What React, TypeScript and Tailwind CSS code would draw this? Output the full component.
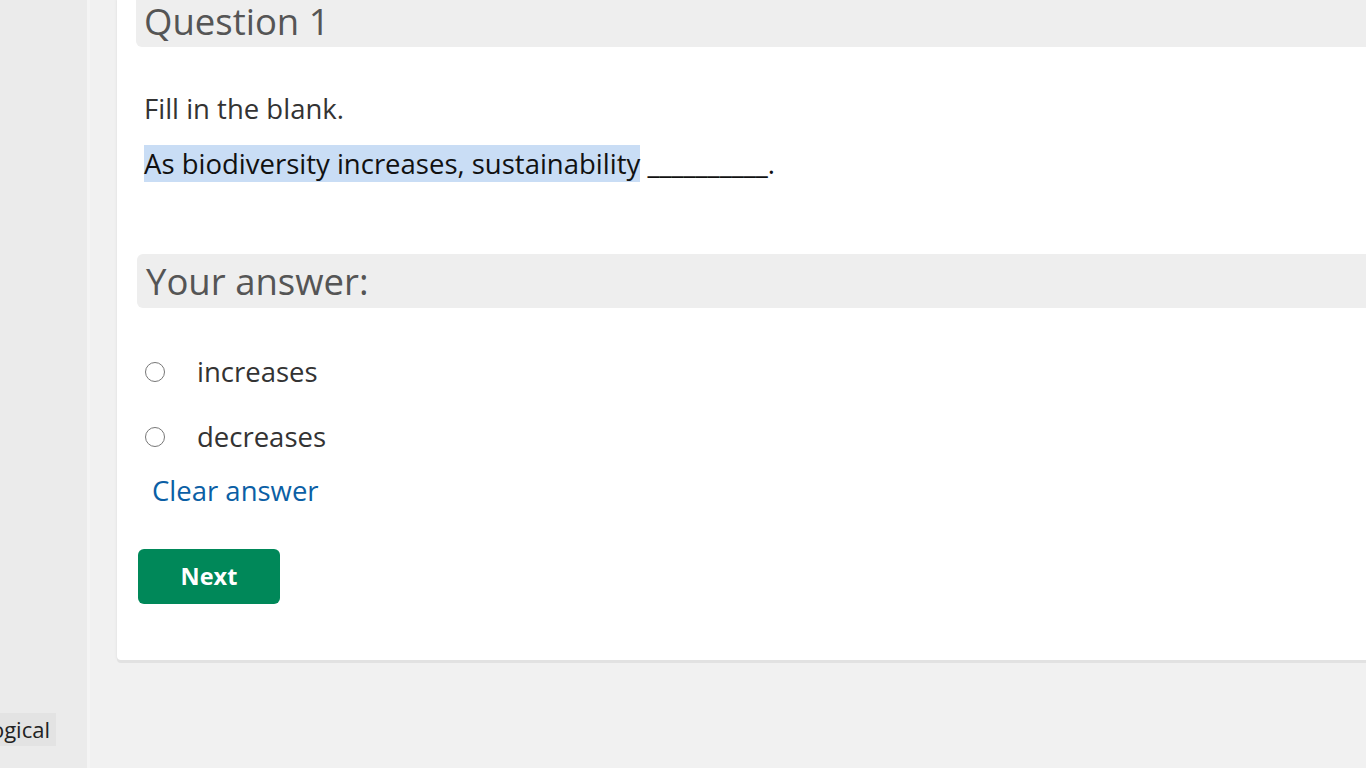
import React from 'react';

const font = { fontFamily: '"Open Sans", "Noto Sans", sans-serif' };

const Radio: React.FC<{ label: string }> = ({ label }) => (
  <label className="flex items-center h-[41px] cursor-pointer">
    <span className="ml-[9px] w-[20px] h-[20px] rounded-full border-[1.5px] border-[#777] bg-white shrink-0" />
    <span className="ml-[32px] text-[27.5px] text-[#333]">{label}</span>
  </label>
);

const App: React.FC = () => {
  return (
    <div className="flex w-[1366px] h-[768px] overflow-hidden bg-[#f1f1f1]" style={font}>
      {/* Sidebar */}
      <div className="w-[90px] shrink-0 bg-[#ebebeb] border-r-[3px] border-[#f4f4f4] flex flex-col justify-end pb-[22px]">
        <div className="w-[56px] h-[33px] bg-[#e3e3e3] overflow-hidden flex justify-end items-center">
          <span className="text-[22px] text-[#222] whitespace-nowrap pr-[6px]">Biological</span>
        </div>
      </div>

      {/* Main */}
      <div className="flex-1 pl-[27px]">
        <div className="bg-white h-[660px] rounded-bl-[4px] shadow-[0_3px_0_0_#e2e2e2,-1px_0_2px_0_#e6e6e6] pl-[19px]">
          {/* Question header */}
          <div className="h-[47px] bg-[#eeeeee] rounded-bl-[6px] pl-[8px] flex items-center">
            <h2 className="text-[36.5px] leading-[42px] text-[#555] -mt-[5px]">Question 1</h2>
          </div>

          <div className="pl-[8px]">
            <p className="mt-[41px] text-[27.5px] leading-[41px] text-[#333]">Fill in the blank.</p>
            <p className="mt-[14px] text-[27.5px] leading-[41px] text-[#111]">
              <span className="bg-[#c9ddf5]">As biodiversity increases, sustainability</span> __________.
            </p>
          </div>

          {/* Answer header */}
          <div className="mt-[70px] ml-[1px] h-[54px] bg-[#eeeeee] rounded-l-[6px] pl-[9px] flex items-center">
            <h3 className="text-[36.5px] text-[#555]">Your answer:</h3>
          </div>

          <div className="mt-[43px] flex flex-col gap-[24px]">
            <Radio label="increases" />
            <Radio label="decreases" />
          </div>

          <button className="ml-[16px] mt-[13px] text-[27.5px] leading-[41px] text-[#0b5fa5]">Clear answer</button>

          <div className="mt-[38px]">
            <button className="ml-[2px] w-[142px] h-[55px] rounded-[6px] bg-[#008859] text-white font-bold text-[23.5px]">
              Next
            </button>
          </div>
        </div>
      </div>
    </div>
  );
};

export default App;
